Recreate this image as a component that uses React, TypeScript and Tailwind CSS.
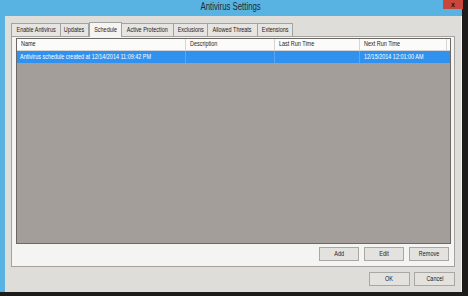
import React from "react";

const font = { fontFamily: '"Liberation Sans", Arial, sans-serif' };

const tabs = [
  { label: "Enable Antivirus", w: 50 },
  { label: "Updates", w: 28 },
  { label: "Schedule", w: 33, active: true },
  { label: "Active Protection", w: 52 },
  { label: "Exclusions", w: 34 },
  { label: "Allowed Threats", w: 50 },
  { label: "Extensions", w: 35 },
];

const columns = [
  { label: "Name", w: 169 },
  { label: "Description", w: 89 },
  { label: "Last Run Time", w: 85 },
  { label: "Next Run Time", w: 87 },
];

// the screenshot is squashed sideways, so text is narrowed
function Narrow({ children, left = false }: { children: React.ReactNode; left?: boolean }) {
  return (
    <span
      className={`inline-block whitespace-nowrap scale-x-[0.78] ${left ? "origin-left" : "origin-center"}`}
    >
      {children}
    </span>
  );
}

function WinButton({ label, className = "" }: { label: string; className?: string }) {
  return (
    <div
      className={`flex items-center justify-center border border-[#a9a7a4] bg-[#e3e2df] text-[7px] text-[#1b1b1b] ${className}`}
    >
      <Narrow>{label}</Narrow>
    </div>
  );
}

export default function App() {
  return (
    <div className="w-[468px] h-[296px] bg-[#1d1c1b] overflow-hidden" style={font}>
      <div className="w-[462px] h-[292px] flex flex-col bg-[#58b3e2]">
        {/* Title bar */}
        <div className="relative h-[16px] flex items-center justify-center">
          <span className="text-[10px] text-[#1e2a33] leading-none -mt-[3px]">
            <Narrow>Antivirus Settings</Narrow>
          </span>
          <div className="absolute right-[-1px] top-0 w-[20px] h-[9px] bg-[#c8463a] flex items-center justify-center">
            <span className="text-[7px] font-bold text-[#2a1410] leading-none">x</span>
          </div>
        </div>

        <div className="flex-1 flex">
          <div className="w-[5px]" />
          <div className="flex-1 flex flex-col bg-[#dfddd9] border-r border-[#f2f1ee] px-[6px] pt-[6px]">
            {/* Tab strip */}
            <div className="flex items-end h-[14px]">
              {tabs.map((t) => (
                <div
                  key={t.label}
                  className={
                    t.active
                      ? "h-[15px] -mb-px relative z-10 flex items-center justify-center border border-b-0 border-[#a4a29f] bg-[#f4f4f2] text-[7px] text-[#1b1b1b]"
                      : "h-[13px] flex items-center justify-center border border-b-0 border-l-0 first:border-l border-[#a4a29f] bg-[#e6e5e2] text-[7px] text-[#1b1b1b]"
                  }
                  style={{ width: t.w }}
                >
                  <Narrow>{t.label}</Narrow>
                </div>
              ))}
            </div>

            {/* Tab panel */}
            <div className="h-[231px] flex flex-col border border-[#a4a29f] bg-[#f4f4f2] pl-[4px] pr-[3px] pt-[1px]">
              {/* List view */}
              <div className="h-[206px] flex flex-col border border-[#6b6866] bg-[#a39e9a]">
                <div className="h-[12px] flex bg-[#fbfbfa] border-b border-[#d6d5d3]">
                  {columns.map((c) => (
                    <div
                      key={c.label}
                      className="h-full flex items-center pl-[4px] border-r border-[#d6d5d3] text-[7px] text-[#1b1b1b]"
                      style={{ width: c.w }}
                    >
                      <Narrow left>{c.label}</Narrow>
                    </div>
                  ))}
                  <div className="flex-1" />
                </div>
                <div className="h-[12px] flex bg-[#3092ee] text-white text-[7px]">
                  <div className="h-full flex items-center pl-[3px] border-r border-[#5aa7f0]" style={{ width: 169 }}>
                    <Narrow left>Antivirus schedule created at 12/14/2014 11:09:42 PM</Narrow>
                  </div>
                  <div className="h-full border-r border-[#5aa7f0]" style={{ width: 89 }} />
                  <div className="h-full border-r border-[#5aa7f0]" style={{ width: 85 }} />
                  <div className="h-full flex items-center pl-[4px]" style={{ width: 87 }}>
                    <Narrow left>12/15/2014 12:01:00 AM</Narrow>
                  </div>
                  <div className="flex-1" />
                </div>
              </div>

              {/* Add / Edit / Remove */}
              <div className="flex justify-end gap-[5px] mt-[3px] pr-[2px]">
                <WinButton label="Add" className="w-[40px] h-[14px]" />
                <WinButton label="Edit" className="w-[40px] h-[14px]" />
                <WinButton label="Remove" className="w-[40px] h-[14px]" />
              </div>
            </div>

            {/* OK / Cancel */}
            <div className="flex justify-end gap-[4px] mt-[5px]">
              <WinButton label="OK" className="w-[41px] h-[14px]" />
              <WinButton label="Cancel" className="w-[41px] h-[14px]" />
            </div>
          </div>
        </div>
      </div>
    </div>
  );
}
